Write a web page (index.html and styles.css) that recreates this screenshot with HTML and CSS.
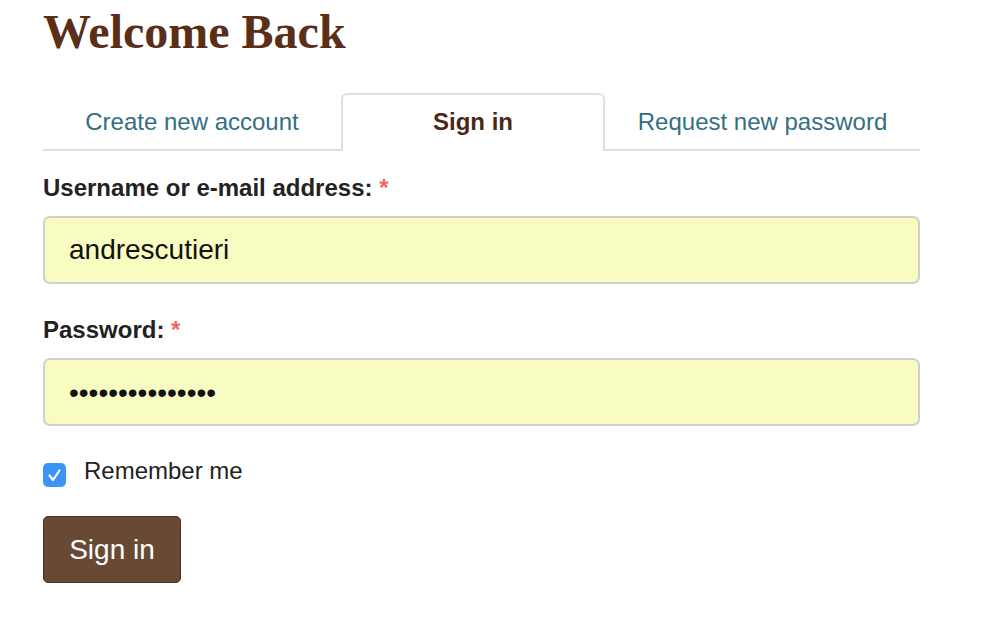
FILE: index.html
```html
<!DOCTYPE html>
<html>
<head>
<meta charset="utf-8">
<link rel="stylesheet" href="styles.css">
</head>
<body>
<div class="page">
  <h1 class="title">Welcome Back</h1>
  <ul class="tabs">
    <li class="tab tab-create"><a href="#">Create new account</a></li>
    <li class="tab tab-signin active"><a href="#">Sign in</a></li>
    <li class="tab tab-request"><a href="#">Request new password</a></li>
  </ul>
  <form class="form">
    <div class="field">
      <label class="label">Username or e-mail address: <span class="req">*</span></label>
      <div class="input">andrescutieri</div>
    </div>
    <div class="field">
      <label class="label">Password: <span class="req">*</span></label>
      <div class="input dots">&#8226;&#8226;&#8226;&#8226;&#8226;&#8226;&#8226;&#8226;&#8226;&#8226;&#8226;&#8226;&#8226;&#8226;&#8226;</div>
    </div>
    <div class="remember">
      <span class="check"><svg width="23" height="24" viewBox="0 0 23 24"><path d="M6.5 12.5 L10 17 L16.5 7.5" fill="none" stroke="#fff" stroke-width="2.2" stroke-linecap="round" stroke-linejoin="round"/></svg></span>
      <span class="remember-text">Remember me</span>
    </div>
    <button type="button" class="btn">Sign in</button>
  </form>
</div>
</body>
</html>
```
FILE: styles.css
```css
* { box-sizing: border-box; }
body {
  margin: 0;
  background: #fff;
  font-family: "Liberation Sans", Arial, sans-serif;
}
.page {
  width: 920px;
  padding: 10px 0 0 43px;
}
.title {
  margin: 0;
  font-family: "Liberation Serif", "Times New Roman", serif;
  font-weight: bold;
  font-size: 48px;
  line-height: 44px;
  color: #5a2e17;
}
.tabs {
  list-style: none;
  margin: 40px 0 0;
  padding: 0;
  display: flex;
  border-bottom: 2px solid #dfdfdf;
  height: 57px;
}
.tab {
  height: 56px;
  display: flex;
  align-items: center;
  justify-content: center;
  font-size: 24px;
}
.tab a {
  color: #336f80;
  text-decoration: none;
}
.tab-create { width: 298px; }
.tab-signin { width: 264px; }
.tab-request { width: 315px; }
.tab.active {
  border: 2px solid #dfdfdf;
  border-bottom: none;
  border-radius: 6px 6px 0 0;
  background: #fff;
  height: 58px;
  margin-top: -1px;
  padding-bottom: 2px;
}
.tab.active a {
  color: #4b2816;
  font-weight: bold;
}
.form {
  padding-top: 23px;
}
.field {
  margin-bottom: 32px;
}
.label {
  display: block;
  font-weight: bold;
  font-size: 24px;
  line-height: 28px;
  color: #222;
  margin-bottom: 14px;
}
.req {
  color: #ee6666;
}
.input {
  height: 68px;
  border: 2px solid #cfcfcf;
  border-radius: 7px;
  background: #f9fcc0;
  padding: 0 24px;
  display: flex;
  align-items: center;
  font-size: 28px;
  color: #111;
}
.input.dots {
  font-size: 28px;
  padding-top: 2px;
}
.remember {
  display: flex;
  align-items: flex-start;
  height: 58px;
}
.check {
  width: 23px;
  height: 24px;
  border-radius: 5px;
  background: #3c95f4;
  margin-top: 5px;
  display: block;
}
.check svg { display: block; }
.remember-text {
  margin-left: 18px;
  font-size: 24px;
  line-height: 26px;
  color: #222;
}
.btn {
  display: block;
  width: 138px;
  height: 67px;
  border: 1px solid #4c3222;
  border-radius: 5px;
  background: #684a34;
  color: #fff;
  font-family: "Liberation Sans", Arial, sans-serif;
  font-size: 28px;
  padding: 0;
}
```
